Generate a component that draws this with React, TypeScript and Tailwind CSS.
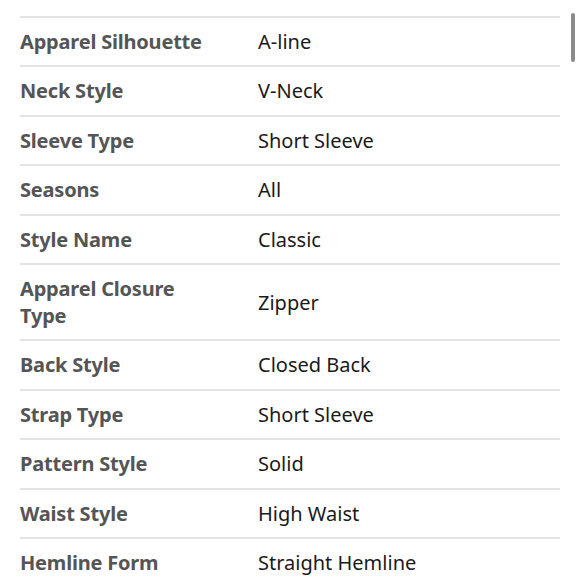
const rows: [string, string][] = [
  ["Pattern", "Solid"],
  ["Apparel Silhouette", "A-line"],
  ["Neck Style", "V-Neck"],
  ["Sleeve Type", "Short Sleeve"],
  ["Seasons", "All"],
  ["Style Name", "Classic"],
  ["Apparel Closure Type", "Zipper"],
  ["Back Style", "Closed Back"],
  ["Strap Type", "Short Sleeve"],
  ["Pattern Style", "Solid"],
  ["Waist Style", "High Waist"],
  ["Hemline Form", "Straight Hemline"],
]

export default function App() {
  return (
    <div className="relative h-[580px] w-[580px] overflow-hidden bg-white font-['Noto_Sans',sans-serif]">
      <div className="-mt-[32px] px-5">
        {rows.map(([label, value]) => (
          <div
            key={label}
            className="grid grid-cols-[238px_1fr] items-center border-b-2 border-[#e3e3e3] py-[10px] min-h-[49.5px]"
          >
            <div className="max-w-[195px] text-[20px] font-bold leading-[27px] tracking-[-0.2px] text-[#555]">{label}</div>
            <div className="text-[20px] leading-[27px] text-[#1a1a1a]">{value}</div>
          </div>
        ))}
      </div>
      <div className="absolute right-[5px] top-[13px] h-[49px] w-[4px] rounded-full bg-[#8a8a8a]" />
    </div>
  )
}
